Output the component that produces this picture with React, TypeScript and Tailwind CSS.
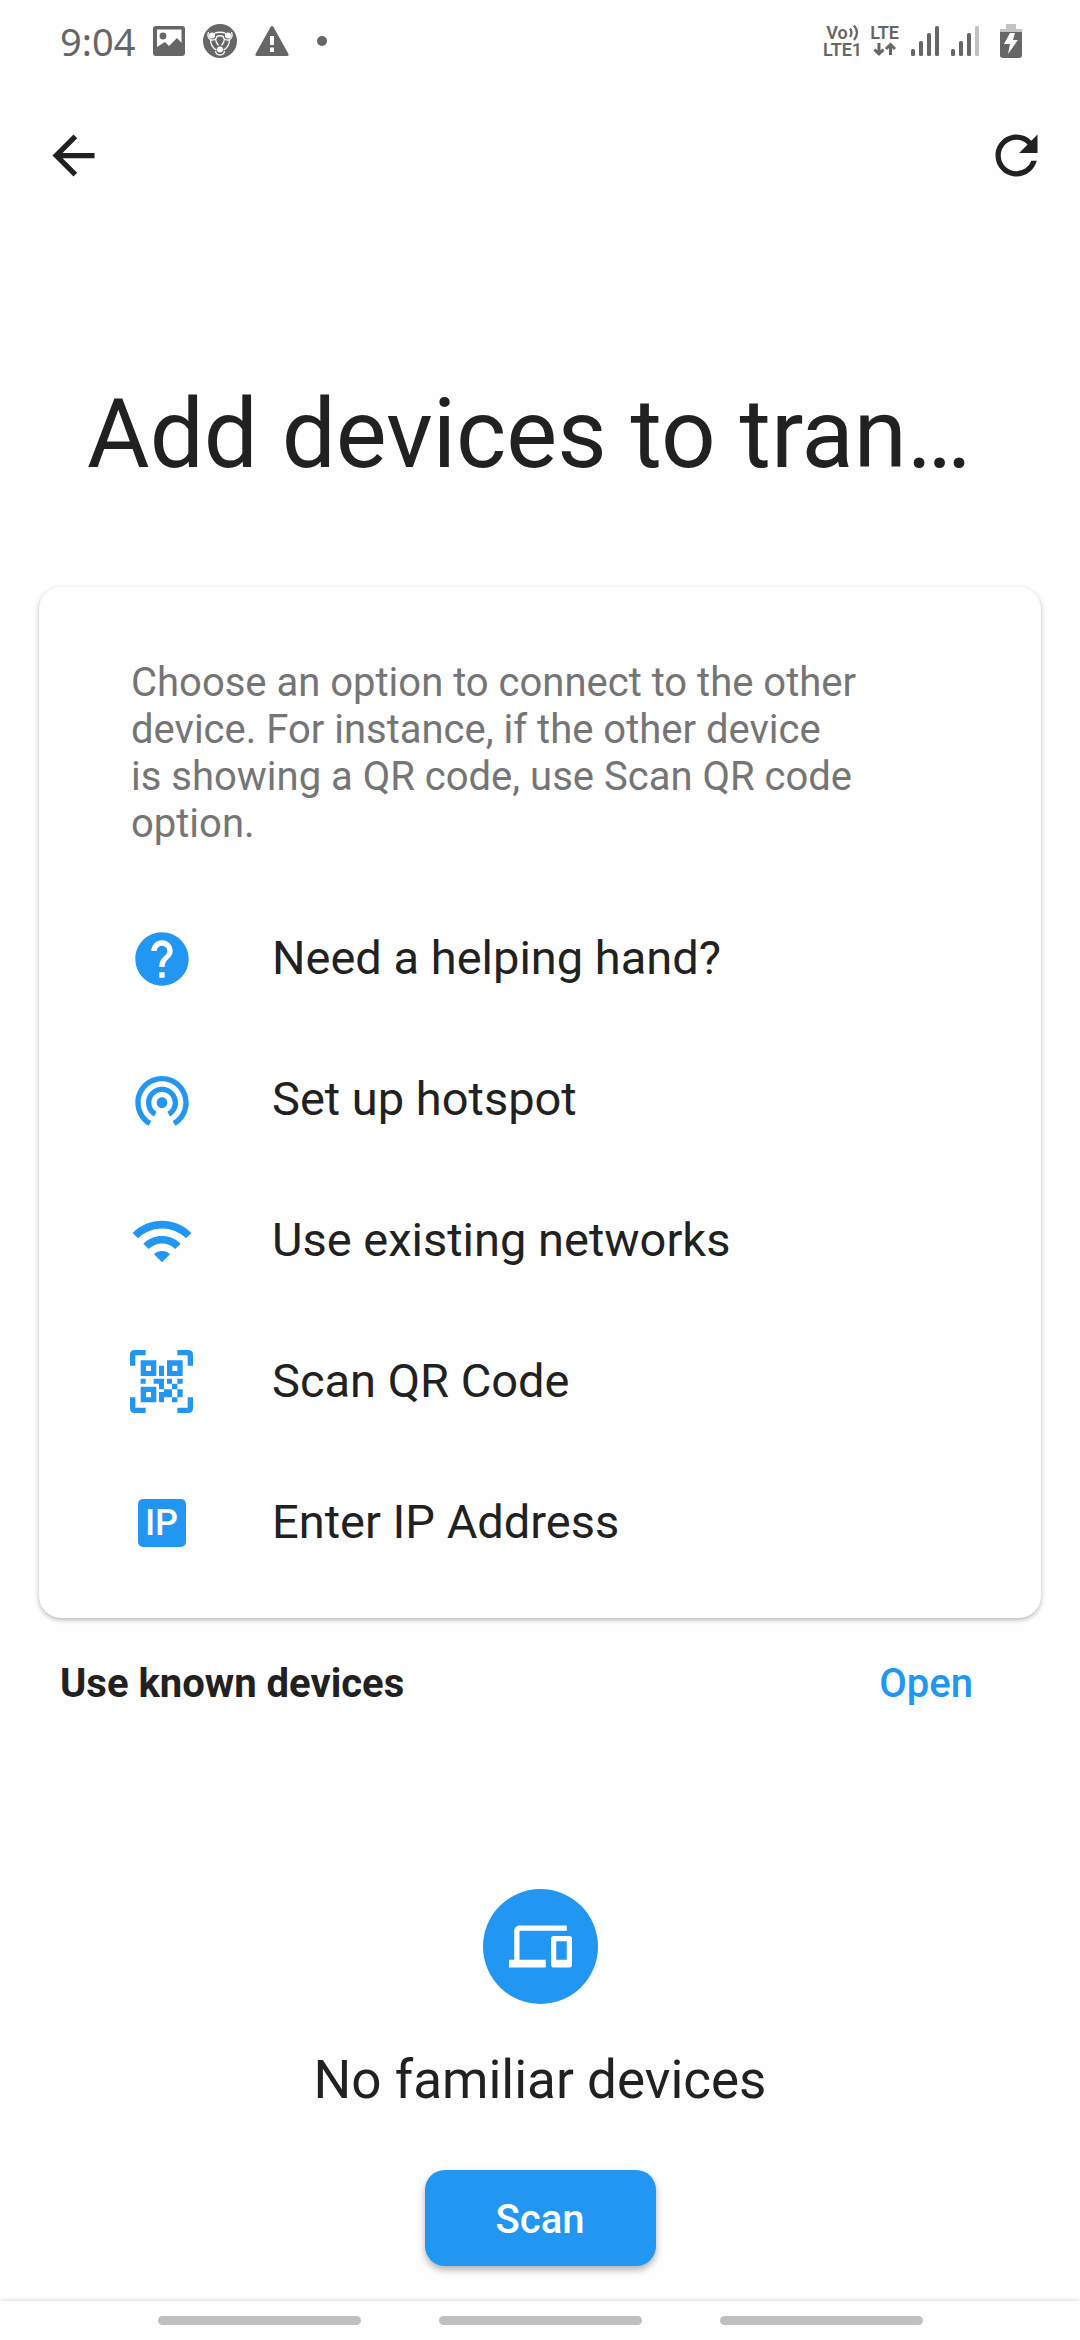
import React, { useState } from 'react';
import {
  MdArrowBack,
  MdDevices,
  MdHelp,
  MdRefresh,
  MdWifi,
  MdWifiTethering,
} from 'react-icons/md';

const QrScanIcon = () => (
  <svg viewBox="0 0 189 189" className="h-[63px] w-[63px] shrink-0" fill="currentColor" aria-hidden="true">
    {/* Corner brackets */}
    <path d="M0 47V14Q0 0 14 0H47V16H16V47Z" />
    <path d="M142 0H175Q189 0 189 14V47H173V16H142Z" />
    <path d="M0 142V175Q0 189 14 189H47V173H16V142Z" />
    <path d="M142 189H175Q189 189 189 175V142H173V173H142Z" />
    {/* Finder squares */}
    <path fillRule="evenodd" d="M32 31H79V78H32ZM48 47V63H63V47Z" />
    <path fillRule="evenodd" d="M111 31H158V78H111ZM127 47V63H142V47Z" />
    <path fillRule="evenodd" d="M32 110H79V157H32ZM48 126V142H63V126Z" />
    {/* Modules */}
    <path d="M87 47H102V78H87ZM32 86H47V101H32ZM71 86H102V118H87V101H71ZM111 86H126V101H111ZM142 86H158V101H142ZM126 101H142V118H126Z" />
    <path d="M87 126H102V118H126V142H102V157H87ZM142 118H158V142H142ZM126 142H142V157H126Z" />
  </svg>
);

const IpIcon = () => (
  <span
    aria-hidden="true"
    className="flex h-12 w-12 items-center justify-center rounded-[5px] bg-[#2196f3] text-[36px] leading-none font-medium text-[#fefefe]"
  >
    IP
  </span>
);

const options = [
  { label: 'Need a helping hand?', icon: <MdHelp size={64} className="shrink-0" /> },
  { label: 'Set up hotspot', icon: <MdWifiTethering size={64} className="shrink-0" /> },
  { label: 'Use existing networks', icon: <MdWifi size={64} className="shrink-0" /> },
  { label: 'Scan QR Code', icon: <QrScanIcon /> },
  { label: 'Enter IP Address', icon: <IpIcon /> },
];

const SignalIcon = ({ weak = false }: { weak?: boolean }) => (
  <svg width="28" height="30" viewBox="0 0 28 30" fill="currentColor" aria-hidden="true">
    <rect x="0" y="23" width="4" height="7" rx="1.5" />
    <rect x="8" y="15" width="4" height="15" rx="1.5" />
    <rect x="16" y="7" width="4" height="23" rx="1.5" />
    <rect x="24" y="0" width="4" height="30" rx="1.5" opacity={weak ? 0.4 : 1} />
  </svg>
);

const StatusBar = () => (
  <div className="flex h-[82px] items-center justify-between pr-[58px] pl-[60px] text-[#666]">
    <div className="flex items-center gap-[18px]">
      <span className="font-['Noto_Sans',sans-serif] text-[38px] leading-none">9:04</span>
      <svg width="32" height="30" viewBox="0 0 32 30" fill="currentColor" aria-hidden="true">
        <path
          fillRule="evenodd"
          d="M3 0H29Q32 0 32 3V27Q32 30 29 30H3Q0 30 0 27V3Q0 0 3 0ZM4 3.500V21L12 16L16 20L24 12L28.500 17V3.500Z"
        />
        <circle cx="10" cy="10" r="3.400" />
      </svg>
      <svg width="34" height="34" viewBox="0 0 34 34" aria-hidden="true">
        <circle cx="17" cy="17" r="17" fill="currentColor" />
        <g fill="none" stroke="#fefefe" strokeWidth="1.300">
          <path d="M11 9.500Q17 7 23 9.500" />
          <path d="M7.500 15Q7.500 23 13.500 26" />
          <path d="M26.500 15Q26.500 23 20.500 26" />
          <path d="M12.500 15Q13 19 15.500 21.500" />
          <path d="M21.500 15Q21 19 18.500 21.500" />
          <path d="M13.500 12.500Q17 11 20.500 12.500" />
          <path d="M5.500 8Q3.500 14 8.500 16Q13.500 16.500 14 12" />
          <path d="M28.500 8Q30.500 14 25.500 16Q20.500 16.500 20 12" />
          <path d="M12.500 27Q13 31 17 31Q21 31 21.500 27" />
        </g>
        <g fill="#fefefe">
          <circle cx="9" cy="11.500" r="3" />
          <circle cx="25" cy="11.500" r="3" />
          <circle cx="17" cy="25.500" r="3" />
        </g>
      </svg>
      <svg width="34" height="30" viewBox="0 0 34 30" fill="currentColor" aria-hidden="true">
        <path
          fillRule="evenodd"
          d="M15.500 1Q17 -1 18.500 1L33.500 28Q34 30 32 30H2Q0 30 .5 28ZM15 10V19H19V10ZM15 21.500V26H19V21.500Z"
        />
      </svg>
      <span className="ml-[10px] h-[10px] w-[10px] rounded-full bg-[#666]" />
    </div>

    <div className="flex items-center text-[18px] leading-[17px] font-semibold">
      <div className="flex flex-col items-center">
        <span className="flex items-center">
          Vo
          <svg width="11" height="17" viewBox="0 0 11 17" fill="none" stroke="currentColor" strokeWidth="2.200" aria-hidden="true">
            <path d="M2 4.500Q5 8.500 2 13M6 1.500Q12 8.500 6 16" />
          </svg>
        </span>
        <span>LTE1</span>
      </div>
      <div className="ml-2 flex flex-col items-center">
        <span>LTE</span>
        <svg width="24" height="17" viewBox="0 0 24 17" fill="none" stroke="currentColor" strokeWidth="3" aria-hidden="true">
          <path d="M6 2V13M1.500 8.500L6 13L10.500 8.500M17.500 14V4M13 8L17.500 3.500L22 8" />
        </svg>
      </div>
      <div className="ml-3 flex gap-3">
        <SignalIcon />
        <SignalIcon weak />
      </div>
      <svg width="22" height="34" viewBox="0 0 22 34" className="ml-[21px]" aria-hidden="true">
        <path d="M6 0H16V5H22V9H0V5H6Z" fill="#c4c4c4" />
        <path d="M0 8H22V31Q22 34 19 34H3Q0 34 0 31Z" fill="currentColor" />
        <path d="M10 9H15L13 16H18L8 30L10 20H4Z" fill="#fefefe" />
      </svg>
    </div>
  </div>
);

export default function App() {
  const [selected, setSelected] = useState<string | null>(null);

  return (
    <div className="flex min-h-screen flex-col bg-[#fefefe] font-['Roboto',sans-serif] text-[#212121]">
      <StatusBar />

      <header className="flex items-center justify-between pt-[42px] pr-8 pl-[42px]">
        <button type="button" aria-label="Back">
          <MdArrowBack size={63} />
        </button>
        <button type="button" aria-label="Refresh">
          <MdRefresh size={63} />
        </button>
      </header>

      <main className="flex flex-1 flex-col">
        <h1 className="mt-[187px] mb-[93px] truncate px-[87px] text-[96px] leading-[120px]">
          Add devices to tran…
        </h1>

        <section className="mx-[39px] rounded-[22px] bg-[#fefefe] px-[92px] pt-[72px] pb-[25px] shadow-[0_2px_5px_rgba(0,0,0,0.28)]">
          <p className="text-[40px] leading-[47px] text-[#757575]">
            Choose an option to connect to the other
            <br />
            device. For instance, if the other device
            <br />
            is showing a QR code, use Scan QR code
            <br />
            option.
          </p>
          <ul className="mt-[41px]">
            {options.map((option) => (
              <li key={option.label}>
                <button
                  type="button"
                  aria-pressed={selected === option.label}
                  onClick={() => setSelected(option.label)}
                  className="flex h-[141px] w-full items-center gap-20 text-left text-[47px]"
                >
                  <span className="flex w-[61px] shrink-0 justify-center text-[#2196f3]">{option.icon}</span>
                  <span>{option.label}</span>
                </button>
              </li>
            ))}
          </ul>
        </section>

        <div className="mt-9 flex items-center justify-between pr-[107px] pl-[60px] text-[40px] leading-[60px]">
          <h2 className="font-bold">Use known devices</h2>
          <button type="button" className="font-medium text-[#2196f3]">
            Open
          </button>
        </div>

        <div className="mt-[175px] flex flex-col items-center">
          <div className="flex h-[115px] w-[115px] items-center justify-center rounded-full bg-[#2196f3] text-[#fefefe]">
            <MdDevices size={63} />
          </div>
          <p className="mt-[46px] text-[53px] leading-[60px]">No familiar devices</p>
          <button
            type="button"
            className="mt-[60px] h-24 w-[231px] rounded-[20px] bg-[#2196f3] pt-1 text-[40px] font-medium text-[#fefefe] shadow-[0_4px_7px_rgba(0,0,0,0.3)]"
          >
            Scan
          </button>
        </div>
      </main>

      {/* Gesture hints */}
      <nav className="flex h-[39px] justify-center gap-[78px] bg-[#fefefe] pt-[15px] shadow-[0_-1px_4px_rgba(0,0,0,0.14)]">
        <span className="h-[9px] w-[203px] rounded-full bg-[#c0c0c0]" />
        <span className="h-[9px] w-[203px] rounded-full bg-[#c0c0c0]" />
        <span className="h-[9px] w-[203px] rounded-full bg-[#c0c0c0]" />
      </nav>
    </div>
  );
}
